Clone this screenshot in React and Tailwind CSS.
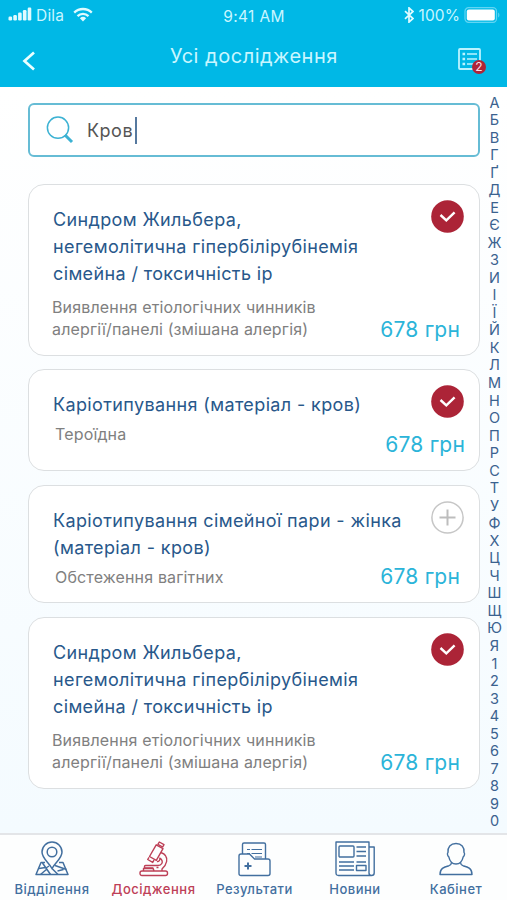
import React from 'react';
import clsx from 'clsx';

const ALPHABET = [...'АБВГҐДЕЄЖЗИІЇЙКЛМНОПРСТУФХЦЧШЩЮЯ1234567890'];

const TESTS = [
  {
    id: 1,
    title: ['Синдром Жильбера,', 'негемолітична гіпербілірубінемія', 'сімейна / токсичність ір'],
    note: ['Виявлення етіологічних чинників', 'алергії/панелі (змішана алергія)'],
    selected: true,
    card: 'h-[172px] mb-[13px]',
    noteClass: 'mt-[10px] -ml-px',
    priceClass: 'mr-[4px] mb-[8px]',
  },
  {
    id: 2,
    title: ['Каріотипування (матеріал - кров)'],
    note: ['Тероїдна'],
    selected: true,
    card: 'h-[102px] mb-[14px]',
    noteClass: 'mt-[6px] ml-[2px]',
    priceClass: 'mr-[-1px] mb-[8px]',
  },
  {
    id: 3,
    title: ['Каріотипування сімейної пари - жінка', '(матеріал - кров)'],
    note: ['Обстеження вагітних'],
    selected: false,
    card: 'h-[118px] mb-[14px]',
    noteClass: 'mt-[6px] ml-[2px]',
    priceClass: 'mr-[4px] mb-[8px]',
  },
  {
    id: 4,
    title: ['Синдром Жильбера,', 'негемолітична гіпербілірубінемія', 'сімейна / токсичність ір'],
    note: ['Виявлення етіологічних чинників', 'алергії/панелі (змішана алергія)'],
    selected: true,
    card: 'h-[172px]',
    noteClass: 'mt-[10px] -ml-px',
    priceClass: 'mr-[4px] mb-[8px]',
  },
];

const StatusBar = () => (
  <div className="flex h-[32px] items-center pl-[8px] pr-[7px] text-[#c9f6ff]">
    <div className="flex flex-1 items-center">
      <svg className="-mt-[3px]" width="24" height="15" viewBox="0 0 24 15" fill="#e0fbff">
        <rect x="0.5" y="9.5" width="3.6" height="4" rx="1.2" />
        <rect x="5.3" y="8" width="3.6" height="5.5" rx="1.2" />
        <rect x="10.1" y="5.5" width="3.6" height="8" rx="1.2" />
        <rect x="14.9" y="3" width="3.6" height="10.5" rx="1.2" />
        <rect x="19.7" y="0.5" width="3.6" height="13" rx="1.2" />
      </svg>
      <span className="ml-[4px] text-[15.5px] tracking-[0.2px]">Dila</span>
      <svg className="ml-[9px] -mt-[4px]" width="20" height="15" viewBox="0 0 20 15" fill="none" stroke="#e0fbff" strokeWidth="2.3">
        <path d="M1.2 5.6a12.6 12.6 0 0 1 17.6 0" />
        <path d="M4.5 9.1a8 8 0 0 1 11 0" />
        <path d="M10 14.4 6.900 11.2a4.5 4.5 0 0 1 6.2 0Z" fill="#e0fbff" stroke="none" />
      </svg>
    </div>
    <span className="mt-px text-[15.5px] tracking-[0.35px]">9:41 AM</span>
    <div className="flex flex-1 items-center justify-end">
      <svg className="-mt-[3px]" width="10" height="16" viewBox="0 0 10 16" fill="none" stroke="#e0fbff" strokeWidth="1.7">
        <path d="m1 4.2 8 7.3-4 3.6V.9l4 3.6-8 7.3" />
      </svg>
      <span className="ml-[5px] text-[15.5px] tracking-[0.1px]">100%</span>
      <svg className="ml-[4px] -mt-[3px]" width="36" height="16" viewBox="0 0 36 16" fill="none">
        <rect x="1" y="0.7" width="31.5" height="14.6" rx="3.6" stroke="#62d5f3" strokeWidth="1.2" />
        <rect x="2.8" y="2.5" width="28" height="11" rx="2" fill="#fff" />
        <path d="M34.2 5.5c1.6.8 1.6 4.2 0 5Z" fill="#62d5f3" />
      </svg>
    </div>
  </div>
);

const Header = () => (
  <header className="h-[87px] bg-[#00b8e6]">
    <StatusBar />
    <div className="flex h-[55px] items-center pl-[22px] pr-[20px]">
      <svg className="mt-[3px]" width="14" height="20" viewBox="0 0 14 20" fill="none" stroke="#eaffff" strokeWidth="2.7">
        <path d="M12 1.5 2.5 10l9.5 8.5" />
      </svg>
      <h1 className="mt-[-7px] flex-1 pl-[14px] text-center text-[20px] tracking-[0.52px] text-[#c9f6ff]">Усі дослідження</h1>
      <div className="relative mt-[-2px] h-[22px] w-[29px]">
        <svg width="23" height="22" viewBox="0 0 23 22" fill="none" stroke="#baf3ff">
          <rect x="1" y="1" width="21" height="20" rx="1" strokeWidth="1.8" />
          <path d="M9 6h10M9 11h10M9 16h10" strokeWidth="1.7" />
          <path d="M4.5 6h2.6M4.5 11h2.6M4.5 16h2.6" strokeWidth="2.4" />
        </svg>
        <span className="absolute left-[14px] top-[12px] flex size-[14px] items-center justify-center rounded-full bg-[#ad2438] text-[12px] leading-none text-[#ffdfe8]">
          2
        </span>
      </div>
    </div>
  </header>
);

const SearchField = () => (
  <div className="mb-[27px] flex h-[54px] items-center rounded-[6px] border-2 border-[#66bcd5] bg-white pl-[16px]">
    <svg width="28" height="28" viewBox="0 0 28 28" fill="none" stroke="#3cb2d3">
      <circle cx="12" cy="11.700" r="10.600" strokeWidth="1.5" />
      <path d="m19 19 7 7" strokeWidth="3" />
    </svg>
    <span className="ml-[13px] text-[18px] tracking-[0.5px] text-[#555]">Кров</span>
    <span className="ml-[2px] h-[27px] w-[2px] bg-[#56799f]" />
  </div>
);

const Mark = ({ selected }) =>
  selected ? (
    <svg width="33" height="33" viewBox="0 0 33 33" fill="none">
      <circle cx="16.5" cy="16.5" r="16.3" fill="#ac2437" />
      <path d="m9.500 15 5.800 5.300 8.300-8" stroke="#fff" strokeWidth="2.4" />
    </svg>
  ) : (
    <svg width="33" height="33" viewBox="0 0 33 33" fill="none">
      <circle cx="16.5" cy="16.5" r="15.6" fill="#fff" stroke="#c6c6c6" strokeWidth="1.5" />
      <path d="M16.5 8.5v16M8.5 16.5h16" stroke="#bdbdbd" strokeWidth="2" />
    </svg>
  );

const TestCard = ({ test }) => (
  <article className={clsx('flex justify-between rounded-[16px] border-[1.5px] border-[#dcdfe1] bg-white pl-[24px] pr-[15px]', test.card)}>
    <div className="shrink-0 whitespace-nowrap pt-[21px]">
      <h2 className="text-[18px] leading-[27px] tracking-[0.37px] text-[#28588b]">
        {test.title.map((line) => (
          <span key={line} className="block">{line}</span>
        ))}
      </h2>
      <p className={clsx('text-[16px] leading-[21.5px] tracking-[0.15px] text-[#808080]', test.noteClass)}>
        {test.note.map((line) => (
          <span key={line} className="block">{line}</span>
        ))}
      </p>
    </div>
    <div className="-ml-[60px] flex flex-col items-end justify-between pt-[15px]">
      <Mark selected={test.selected} />
      <span className={clsx('whitespace-nowrap text-[21px] leading-[34px] tracking-[0.2px] text-[#2bb4d9]', test.priceClass)}>678 грн</span>
    </div>
  </article>
);

const PinIcon = () => (
  <svg width="34" height="36" viewBox="0 0 34 36" fill="none" stroke="currentColor" strokeWidth="1.5" strokeLinejoin="round">
    <path d="M17 27.500C14 21.500 7 17.500 7 11a10 10 0 0 1 20 0c0 6.500-7 10.500-10 16.500Z" />
    <circle cx="17" cy="11" r="4.800" />
    <path d="M10 21.500H6L1 33.500h32l-5-12H24" />
    <path d="m7.500 22 8 11.500M4 27.500l6.500-1M12 28l-6.500 5.500M17 27.500l6 6M20 24.500l11.500 4M22.500 30l6-1.500M14 25l-3 2" />
  </svg>
);

const MicroscopeIcon = () => (
  <svg className="ml-[2px]" width="30" height="36" viewBox="0 0 30 36" fill="none" stroke="currentColor" strokeWidth="1.4" strokeLinejoin="round">
    <path d="m20.300 1 4.700 2.700-1.300 2.300-4.800-2.700Z" />
    <path d="m17.200 3.800 6.800 3.900-6.700 11.700-6.800-3.900ZM10 16.300l-1.300 2.200 5 2.900 1.300-2.200" />
    <path d="M21.800 11.500c4.500 1.500 6.500 5 5.800 9-.6 3.500-2.400 5.500-4.600 7.500v2" />
    <path d="M18 20.500c2 .2 3.300-1.500 2.800-3.300 2.400 1.300 3 3.500 2 5.300-.8 1.500-2 2-3.800 2H6.500q-1 0-1 1v1.500H14l1 3" />
    <path d="M4.500 30v-2.500h9.500M17.500 26.500h2" />
    <rect x="1" y="30" width="27.500" height="4.500" rx="2" />
  </svg>
);

const FolderIcon = () => (
  <svg width="33" height="36" viewBox="0 0 33 36" fill="none" stroke="currentColor" strokeWidth="1.4" strokeLinejoin="round">
    <path d="M4.500 13V3.500q0-1.500 1.500-1.500h20q1.500 0 1.500 1.500V18" />
    <path d="M9 8.500h3M13.500 8.500H24M9 12.500h3M13.500 12.500H24M17 16h7" strokeWidth="1.2" />
    <path d="M1 15q0-2 2-2h8.500l5 5H30q2 0 2 2v12.500q0 2-2 2H3q-2 0-2-2Z" fill="#fdfefe" />
    <path d="M10 21.500v7M6.500 25h7" strokeWidth="2" />
  </svg>
);

const NewsIcon = () => (
  <svg width="40" height="36" viewBox="0 0 40 36" fill="none" stroke="currentColor" strokeWidth="1.4" strokeLinejoin="round">
    <path d="M1 1h33v31q0 2.500 2.500 2.500H3.500Q1 34.500 1 32ZM34 6h5.200v26q0 2.500-2.700 2.500" />
    <rect x="4" y="5" width="15" height="11" rx="1" />
    <path d="M21.500 6H31M21.500 10.500H31M21.500 15H31M4 21h15M4 25h15M4 29h15M21.500 21H31" />
    <rect x="21.500" y="24.500" width="9.500" height="5" />
  </svg>
);

const PersonIcon = () => (
  <svg width="34" height="36" viewBox="0 0 34 36" fill="none" stroke="currentColor" strokeWidth="1.4" strokeLinejoin="round">
    <path d="M17 2.500c-5.500 0-8.500 3.500-8 9-.9.600-.7 3.300.8 4.300 1 4.500 4 7.200 7.200 7.200s6.200-2.700 7.200-7.200c1.500-1 1.700-3.700.8-4.300.5-5.500-2.500-9-8-9Z" />
    <path d="M12.500 21.500q-.2 2.500-2.500 3.200C4.500 26 1 27.500 1 33.500h32c0-6-3.500-7.500-9-8.800q-2.300-.7-2.500-3.200" />
  </svg>
);

const TABS = [
  { label: 'Відділення', Icon: PinIcon, width: 'w-[103px]' },
  { label: 'Досідження', Icon: MicroscopeIcon, width: 'w-[100px]', active: true },
  { label: 'Результати', Icon: FolderIcon, width: 'w-[102px]' },
  { label: 'Новини', Icon: NewsIcon, width: 'w-[99px]' },
  { label: 'Кабінет', Icon: PersonIcon, width: 'w-[103px]' },
];

const TabBar = () => (
  <nav className="flex h-[67px] border-t-2 border-[#e3e5e8] bg-[#fdfefe]">
    {TABS.map(({ label, Icon, width, active }) => (
      <div key={label} className={clsx('flex flex-col items-center pt-[6px]', width, active ? 'text-[#bd4057]' : 'text-[#426f9f]')}>
        <Icon />
        <span className="mt-[2px] pl-px text-[13px] leading-[20px] tracking-[0.5px] font-medium">{label}</span>
      </div>
    ))}
  </nav>
);

export default function App() {
  return (
    <div className="flex h-[900px] w-[507px] flex-col overflow-hidden font-['Inter',sans-serif]">
      <Header />
      <main className="flex h-[746px] bg-linear-to-b from-white to-[#f4fbff]">
        <div className="ml-[28px] w-[452px] pt-[16px]">
          <SearchField />
          {TESTS.map((test) => (
            <TestCard key={test.id} test={test} />
          ))}
        </div>
        <div className="flex w-[27px] flex-col items-center pl-[2px] pt-[6.5px] text-[14.5px] text-[#3b628f]">
          {ALPHABET.map((char) => (
            <span key={char} className="h-[17.54px] leading-[17.54px]">{char}</span>
          ))}
        </div>
      </main>
      <TabBar />
    </div>
  );
}
